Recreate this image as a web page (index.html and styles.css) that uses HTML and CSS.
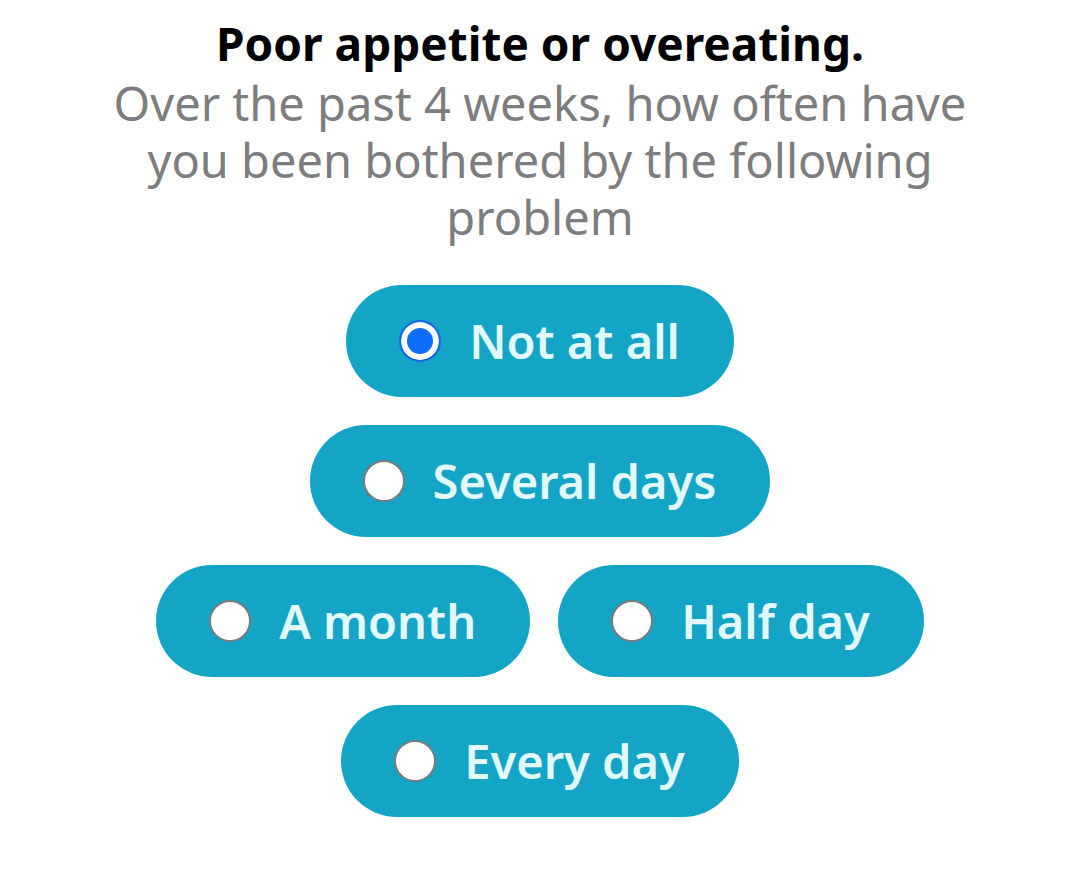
FILE: index.html
```html
<!DOCTYPE html>
<html lang="en">
<head>
<meta charset="utf-8">
<title>Question</title>
<link rel="stylesheet" href="styles.css">
</head>
<body>
<main class="question">
  <h1 class="title">Poor appetite or overeating.</h1>
  <p class="subtitle">Over the past 4 weeks, how often have you been bothered by the following problem</p>
  <form class="options">
    <div class="row">
      <label class="option"><input type="radio" name="freq" checked><span class="dot"></span><span class="label">Not at all</span></label>
    </div>
    <div class="row">
      <label class="option"><input type="radio" name="freq"><span class="dot"></span><span class="label">Several days</span></label>
    </div>
    <div class="row">
      <label class="option"><input type="radio" name="freq"><span class="dot"></span><span class="label">A month</span></label>
      <label class="option"><input type="radio" name="freq"><span class="dot"></span><span class="label">Half day</span></label>
    </div>
    <div class="row">
      <label class="option"><input type="radio" name="freq"><span class="dot"></span><span class="label">Every day</span></label>
    </div>
  </form>
</main>
</body>
</html>
```
FILE: styles.css
```css
* { box-sizing: border-box; }
html, body { margin: 0; padding: 0; background: #ffffff; }
body {
  font-family: "Noto Sans", Lato, sans-serif;
  width: 1080px;
  height: 872px;
  overflow: hidden;
}
.question {
  display: flex;
  flex-direction: column;
  align-items: center;
  padding-top: 15px;
}
.title {
  margin: 0;
  font-size: 46px;
  line-height: 57px;
  font-weight: 700;
  color: #000;
  text-align: center;
}
.subtitle {
  margin: 3px 0 0;
  width: 900px;
  font-size: 47px;
  line-height: 57px;
  font-weight: 400;
  color: #7d7d7d;
  text-align: center;
}
.options {
  margin-top: 39px;
  display: flex;
  flex-direction: column;
  align-items: center;
  gap: 28px;
}
.row {
  display: flex;
  justify-content: center;
  gap: 28px;
}
.option {
  display: flex;
  align-items: center;
  gap: 28px;
  height: 112px;
  padding: 0 54px 0 53px;
  border-radius: 56px;
  background: #13a4c6;
  cursor: pointer;
}
.option input {
  position: absolute;
  opacity: 0;
  width: 0;
  height: 0;
  margin: 0;
}
.dot {
  flex: none;
  width: 42px;
  height: 42px;
  border-radius: 50%;
  background: #ffffff;
  border: 2.5px solid #7a7a7a;
}
.option input:checked + .dot {
  border: 2.5px solid #1766e6;
  background: #0d6efd;
  box-shadow: inset 0 0 0 6px #ffffff;
}
.label {
  font-size: 47px;
  font-weight: 600;
  color: #e2f9fc;
  line-height: 1;
  white-space: nowrap;
}
```
